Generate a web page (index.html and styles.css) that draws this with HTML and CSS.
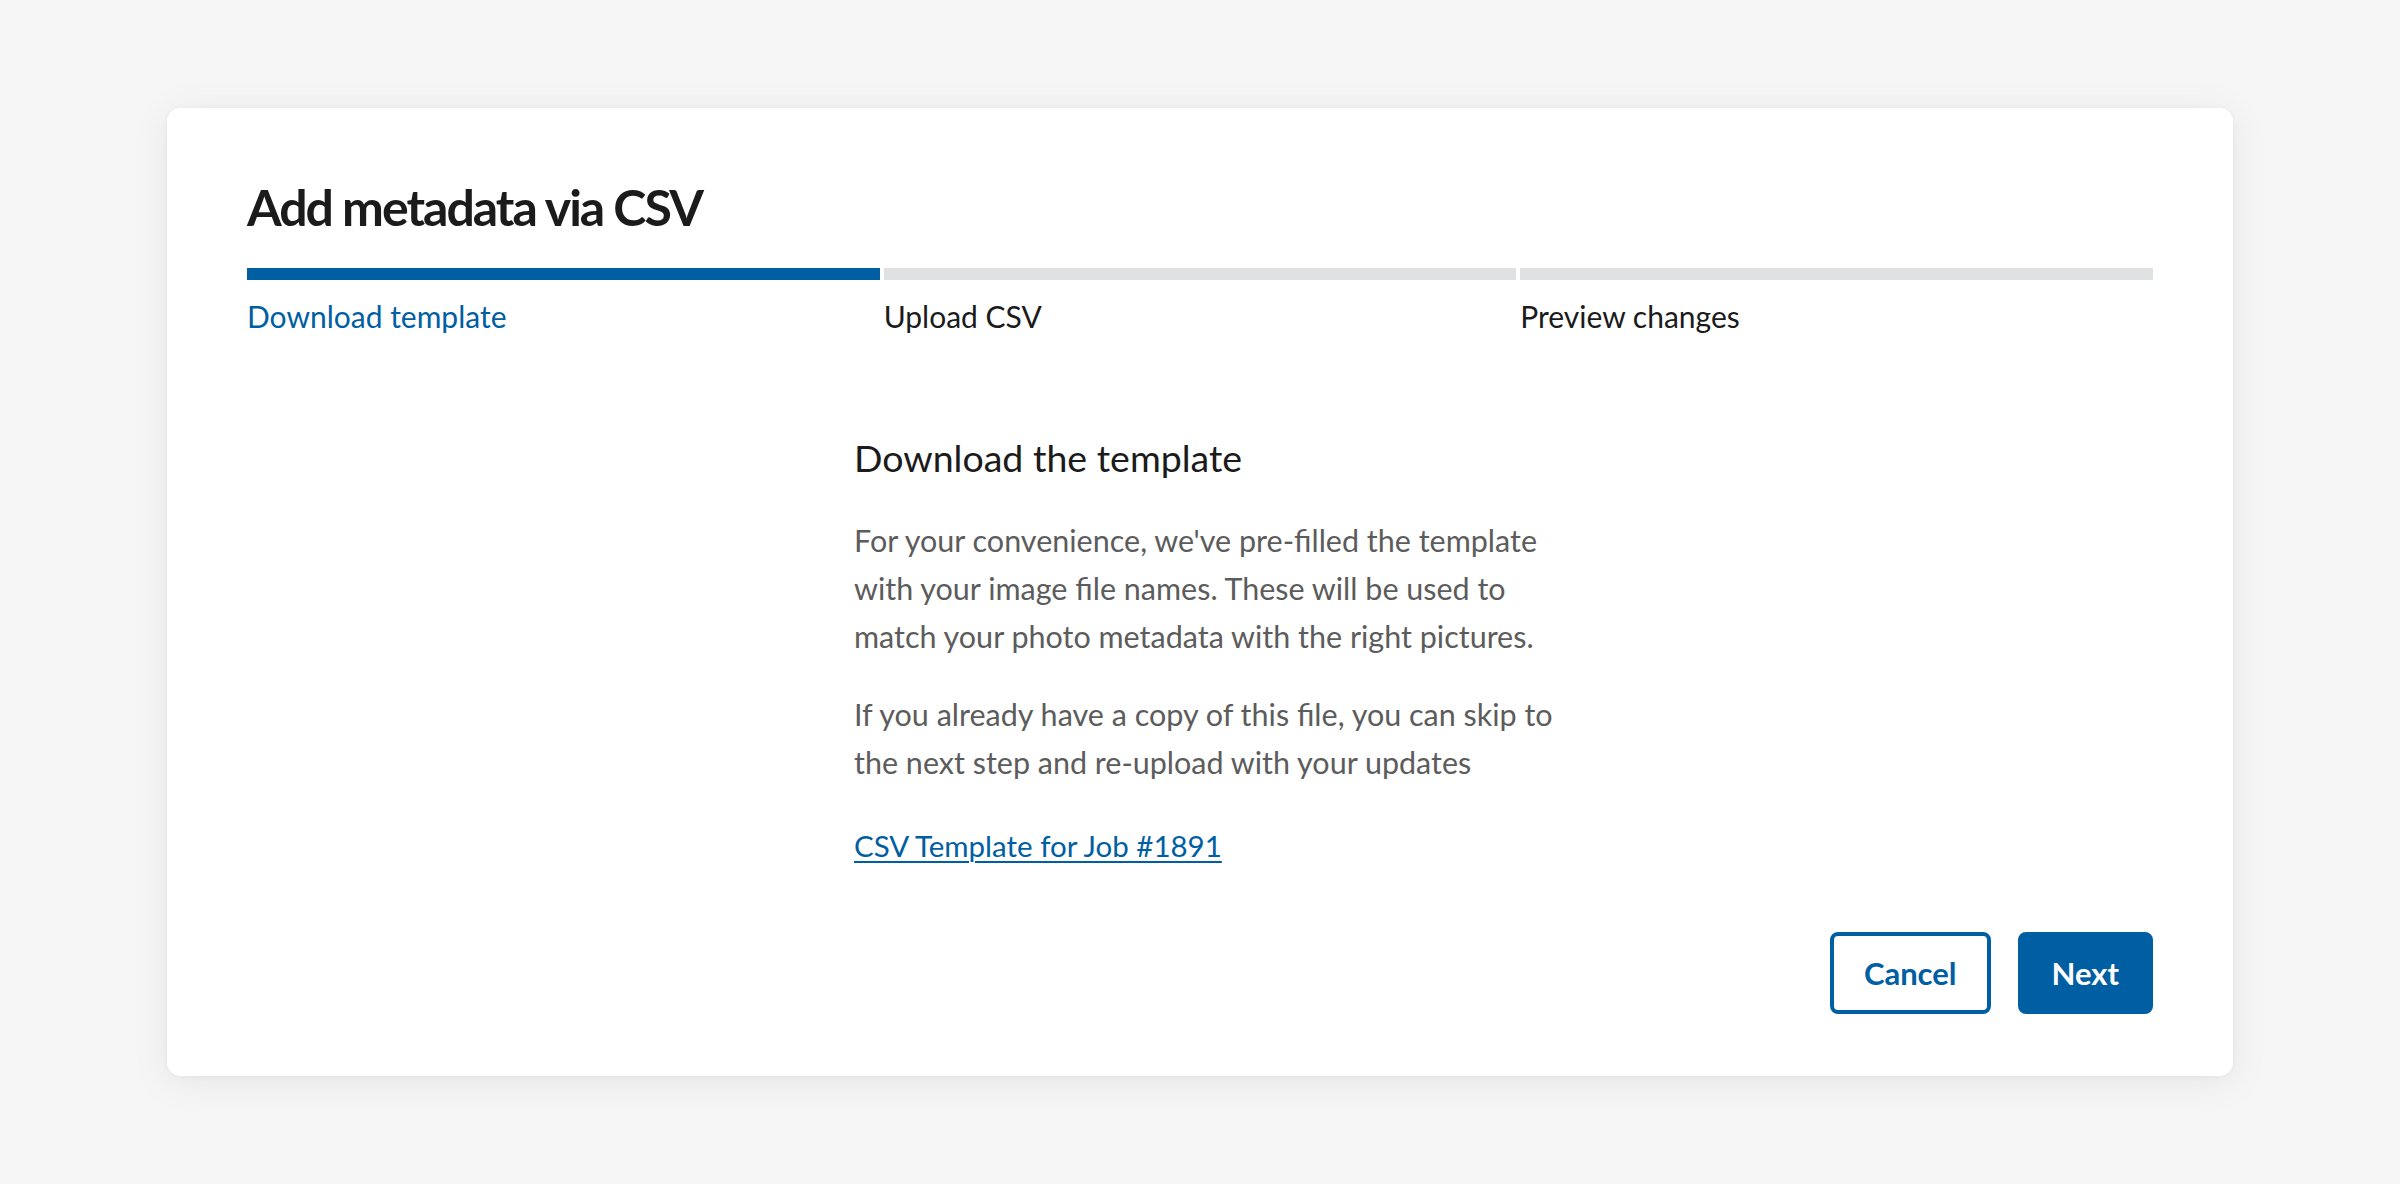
FILE: index.html
```html
<!DOCTYPE html>
<html lang="en">
<head>
<meta charset="utf-8">
<title>Add metadata via CSV</title>
<link rel="stylesheet" href="styles.css">
</head>
<body>
<div class="page">
  <section class="card">
    <h1 class="title">Add metadata via CSV</h1>
    <ol class="steps">
      <li class="step step--current"><span class="step__bar"></span><span class="step__label">Download template</span></li>
      <li class="step"><span class="step__bar"></span><span class="step__label">Upload CSV</span></li>
      <li class="step"><span class="step__bar"></span><span class="step__label">Preview changes</span></li>
    </ol>
    <div class="content">
      <div class="col">
        <h2 class="col__title">Download the template</h2>
        <p class="col__text">For your convenience, we've pre-filled the template<br>with your image file names. These will be used to<br>match your photo metadata with the right pictures.</p>
        <p class="col__text">If you already have a copy of this file, you can skip to<br>the next step and re-upload with your updates</p>
        <p class="col__link"><a href="#" class="link">CSV Template for Job #1891</a></p>
      </div>
    </div>
    <div class="actions">
      <button class="btn btn--outline" type="button">Cancel</button>
      <button class="btn btn--primary" type="button">Next</button>
    </div>
  </section>
</div>
</body>
</html>
```
FILE: styles.css
```css
html, body {
  margin: 0;
  padding: 0;
  background: #f6f6f6;
}
body {
  font-family: "Lato", "Noto Sans", sans-serif;
  color: #1b1b1b;
}
.page {
  height: 1184px;
  display: flex;
  align-items: center;
  justify-content: center;
}
.card {
  width: 2066px;
  box-sizing: border-box;
  background: #ffffff;
  border-radius: 14px;
  box-shadow: 0 6px 40px rgba(0, 0, 0, 0.07), 0 1px 6px rgba(0, 0, 0, 0.04);
  padding: 74px 80px 62px;
}
.title {
  margin: 0;
  font-size: 50px;
  line-height: 50px;
  font-weight: 700;
  letter-spacing: -2px;
  color: #1b1b1b;
}
.steps {
  list-style: none;
  margin: 36px 0 0;
  padding: 0;
  display: grid;
  grid-template-columns: repeat(3, 1fr);
  column-gap: 4px;
}
.step {
  display: flex;
  flex-direction: column;
}
.step__bar {
  height: 12px;
  background: #dfe1e2;
}
.step--current .step__bar {
  background: #005ea2;
}
.step__label {
  margin-top: 16px;
  font-size: 30px;
  line-height: 40px;
  color: #1b1b1b;
}
.step--current .step__label {
  color: #005ea2;
}
.content {
  display: flex;
  justify-content: center;
  margin-top: 100px;
}
.col {
  width: 692px;
}
.col__title {
  margin: 0;
  font-size: 37.5px;
  line-height: 44px;
  font-weight: 400;
  color: #1b1b1b;
}
.col__text {
  margin: 36px 0 0;
  font-size: 30.5px;
  line-height: 48px;
  color: #5c5c5c;
  white-space: nowrap;
}
.col__text + .col__text {
  margin-top: 30px;
}
.col__link {
  margin: 36px 0 0;
  font-size: 29.5px;
  line-height: 48px;
}
.link {
  color: #005ea2;
  text-decoration: underline;
  text-underline-offset: 4px;
  text-decoration-thickness: 2px;
}
.actions {
  display: flex;
  justify-content: flex-end;
  gap: 27px;
  margin-top: 62px;
}
.btn {
  height: 82px;
  box-sizing: border-box;
  padding: 0 30px;
  border-radius: 8px;
  font-family: inherit;
  font-size: 31px;
  font-weight: 700;
  cursor: pointer;
}
.btn--outline {
  background: #ffffff;
  color: #005ea2;
  border: 4px solid #005ea2;
}
.btn--primary {
  background: #005ea2;
  color: #ffffff;
  border: 4px solid #005ea2;
}
```
